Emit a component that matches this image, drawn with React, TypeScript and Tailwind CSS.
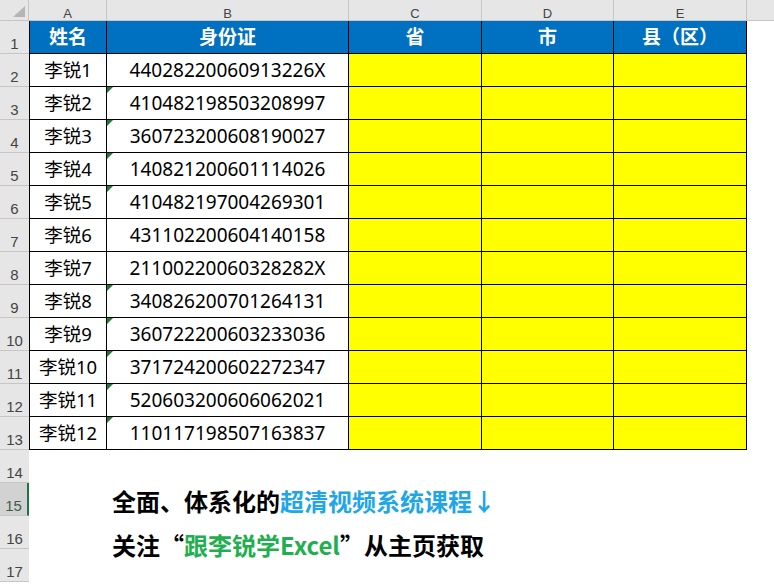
import React from "react";

const rows = [
  { name: "李锐1", id: "44028220060913226X", flag: false },
  { name: "李锐2", id: "410482198503208997", flag: true },
  { name: "李锐3", id: "360723200608190027", flag: true },
  { name: "李锐4", id: "140821200601114026", flag: true },
  { name: "李锐5", id: "410482197004269301", flag: true },
  { name: "李锐6", id: "431102200604140158", flag: false },
  { name: "李锐7", id: "21100220060328282X", flag: false },
  { name: "李锐8", id: "340826200701264131", flag: true },
  { name: "李锐9", id: "360722200603233036", flag: true },
  { name: "李锐10", id: "371724200602272347", flag: true },
  { name: "李锐11", id: "520603200606062021", flag: true },
  { name: "李锐12", id: "110117198507163837", flag: true },
];

const columns = [
  { letter: "A", width: "w-[78px]" },
  { letter: "B", width: "w-[242px]" },
  { letter: "C", width: "w-[133px]" },
  { letter: "D", width: "w-[132px]" },
  { letter: "E", width: "w-[133px]" },
];

const RowHeader = ({ n, selected }: { n: number; selected?: boolean }) => (
  <div
    className={
      selected
        ? "flex w-[29px] shrink-0 items-end justify-center border-r-2 border-b border-r-[#217346] border-b-[#c6c6c6] bg-[#d2d2d2] pb-[1px] text-[15px] leading-none text-[#3f5f4c]"
        : "flex w-[29px] shrink-0 items-end justify-center border-b border-[#c6c6c6] bg-[#e6e6e6] pb-[1px] text-[15px] leading-none text-[#444]"
    }
    style={{ fontFamily: '"Liberation Sans", Arial, sans-serif' }}
  >
    <span className="pb-[1px]">{n}</span>
  </div>
);

const App = () => {
  return (
    <div
      className="relative h-[584px] w-[774px] overflow-hidden bg-white"
      style={{ fontFamily: '"Noto Sans", "Noto Sans CJK SC", sans-serif' }}
    >
      {/* Column letters */}
      <div className="flex h-[21px] border-b border-[#c6c6c6] bg-[#e6e6e6]">
        <div className="relative w-[29px] shrink-0 border-r border-[#c6c6c6]">
          <svg className="absolute right-[3px] bottom-[3px]" width="12" height="11" viewBox="0 0 12 11">
            <polygon points="12,0 12,11 0,11" fill="#b5b5b5" />
          </svg>
        </div>
        {columns.map((c) => (
          <div
            key={c.letter}
            className={`${c.width} flex shrink-0 items-end justify-center border-r border-[#c6c6c6] pb-0 text-[13px] leading-none text-[#444]`}
            style={{ fontFamily: '"Liberation Sans", Arial, sans-serif' }}
          >
            {c.letter}
          </div>
        ))}
        <div className="flex-1" />
      </div>

      {/* Title row */}
      <div className="flex h-[33px]">
        <RowHeader n={1} />
        <div className="flex w-[78px] shrink-0 items-center justify-center border-x border-b border-black bg-[#0070c0] text-[19px] font-bold text-white">
          姓名
        </div>
        <div className="flex w-[242px] shrink-0 items-center justify-center border-r border-b border-black bg-[#0070c0] text-[19px] font-bold text-white">
          身份证
        </div>
        <div className="flex w-[133px] shrink-0 items-center justify-center border-r border-b border-black bg-[#0070c0] text-[19px] font-bold text-white">
          省
        </div>
        <div className="flex w-[132px] shrink-0 items-center justify-center border-r border-b border-black bg-[#0070c0] text-[19px] font-bold text-white">
          市
        </div>
        <div className="flex w-[133px] shrink-0 items-center justify-center border-r border-b border-black bg-[#0070c0] text-[19px] font-bold text-white">
          县（区）
        </div>
      </div>

      {/* Data rows */}
      {rows.map((r, i) => (
        <div key={r.id} className="flex h-[33px]">
          <RowHeader n={i + 2} />
          <div className="flex w-[78px] shrink-0 items-center justify-center border-x border-b border-black text-[18.5px] text-black">
            {r.name}
          </div>
          <div className="relative flex w-[242px] shrink-0 items-center justify-center border-r border-b border-black text-[19px] text-black">
            {r.flag && (
              <svg className="absolute top-0 left-0" width="6" height="6" viewBox="0 0 6 6">
                <polygon points="0,0 6,0 0,6" fill="#1e7a35" />
              </svg>
            )}
            {r.id}
          </div>
          <div className="w-[133px] shrink-0 border-r border-b border-black bg-[#ffff00]" />
          <div className="w-[132px] shrink-0 border-r border-b border-black bg-[#ffff00]" />
          <div className="w-[133px] shrink-0 border-r border-b border-black bg-[#ffff00]" />
        </div>
      ))}

      {/* Empty rows */}
      {[14, 15, 16, 17].map((n) => (
        <div key={n} className="flex h-[33px]">
          <RowHeader n={n} selected={n === 15} />
        </div>
      ))}

      {/* Text box over the sheet */}
      <div
        className="absolute top-[479px] left-[112px] text-[24px] leading-[44px] font-bold text-black"
        style={{ fontFamily: '"Noto Sans CJK SC", "Noto Sans", sans-serif' }}
      >
        <div>
          全面、体系化的<span className="text-[#1ea6e6]">超清视频系统课程↓</span>
        </div>
        <div>
          关注“<span className="text-[#1faf4f]">跟李锐学Excel</span>”从主页获取
        </div>
      </div>
    </div>
  );
};

export default App;
